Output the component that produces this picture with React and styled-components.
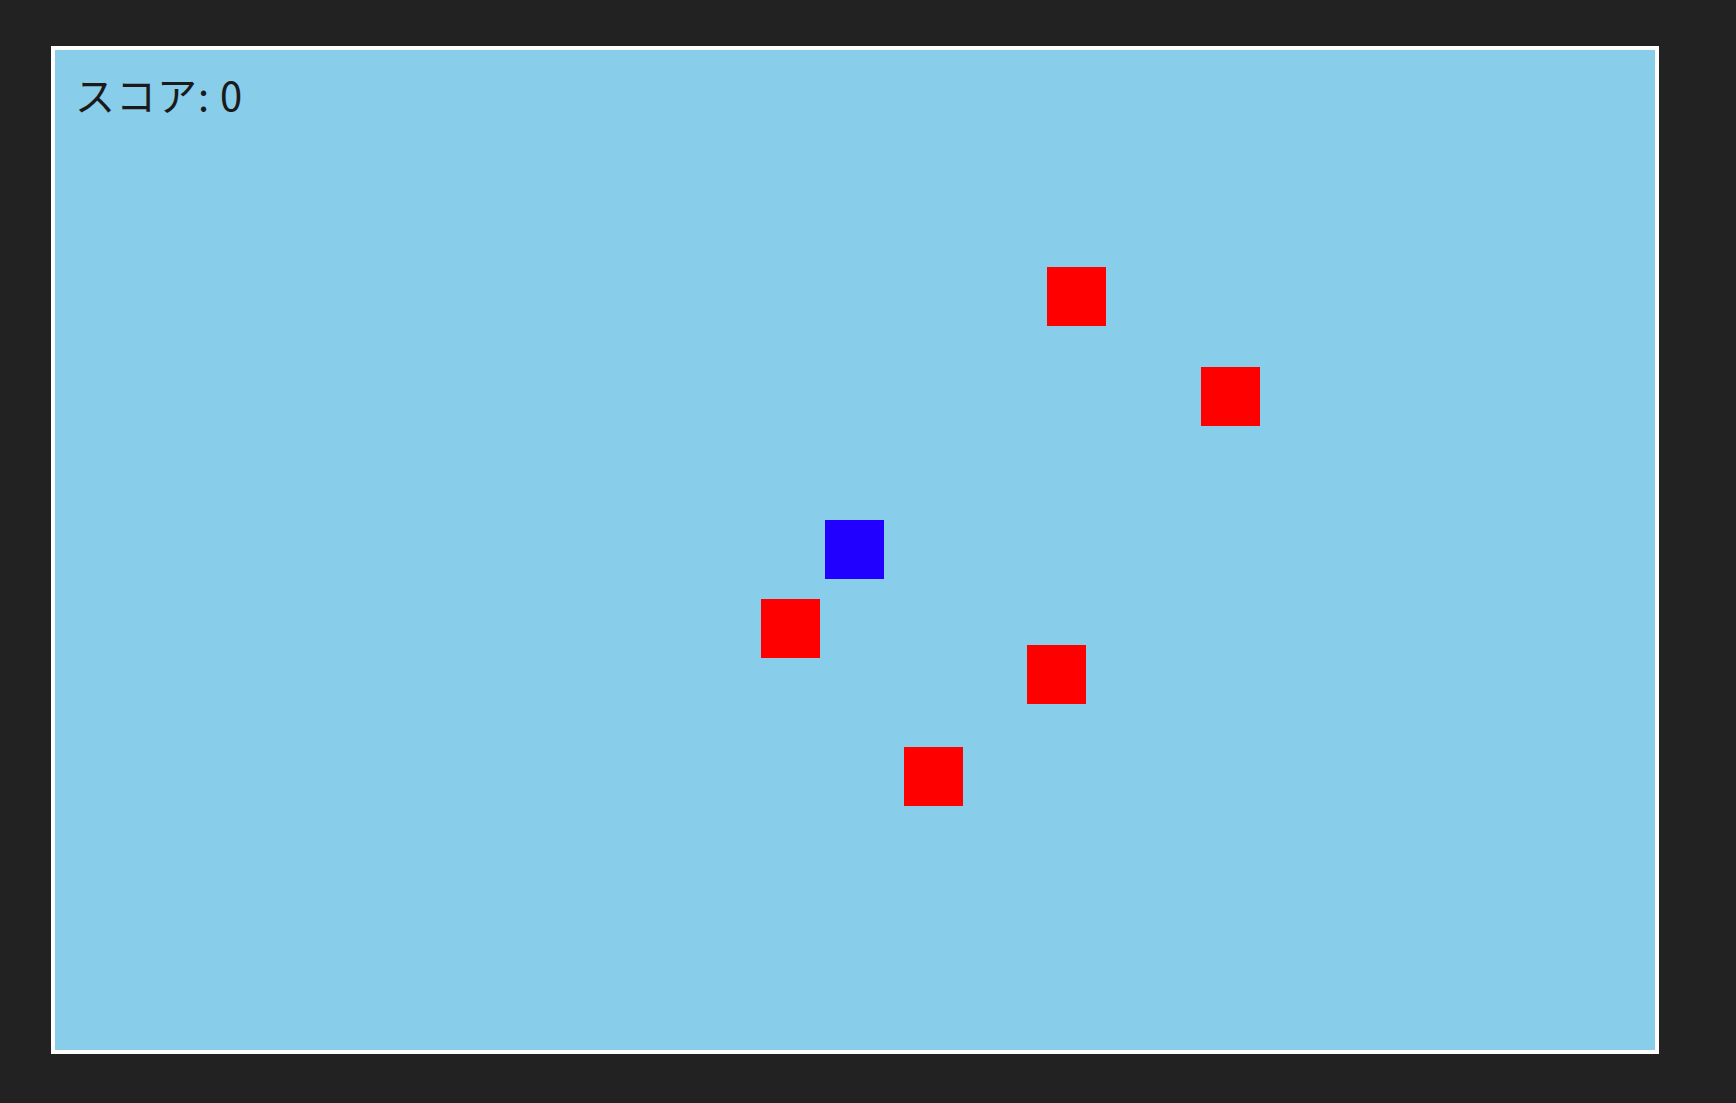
import React from "react";
import styled, { createGlobalStyle } from "styled-components";

const GlobalStyle = createGlobalStyle`
  html, body {
    margin: 0;
    padding: 0;
    background: #222222;
  }
`;

const enemies = [
  { x: 992, y: 217 },
  { x: 1146, y: 317 },
  { x: 706, y: 549 },
  { x: 972, y: 595 },
  { x: 849, y: 697 },
];

const player = { x: 770, y: 470 };

export default function App() {
  return (
    <>
      <GlobalStyle />
      <Page>
        <Board>
          <Score>スコア: 0</Score>
          {enemies.map((e, i) => (
            <Block key={i} $color="#ff0000" style={{ left: e.x, top: e.y }} />
          ))}
          <Block $color="#2200ff" style={{ left: player.x, top: player.y }} />
        </Board>
      </Page>
    </>
  );
}

const Page = styled.div`
  min-height: 1103px;
  padding: 46px 0 0 51px;
  box-sizing: border-box;
`;

const Board = styled.div`
  position: relative;
  width: 1600px;
  height: 1000px;
  background: #88cdea;
  border: 4px solid #ffffff;
  overflow: hidden;
`;

const Score = styled.div`
  position: absolute;
  left: 20px;
  top: 24px;
  font-family: "Noto Sans CJK JP", "Noto Sans", sans-serif;
  font-size: 40px;
  line-height: 1;
  letter-spacing: 1px;
  color: #1a1a1a;
`;

const Block = styled.div`
  position: absolute;
  width: 59px;
  height: 59px;
  background: ${(p) => p.$color};
`;
